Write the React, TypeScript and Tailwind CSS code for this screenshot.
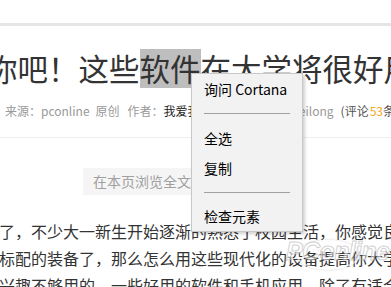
const cjk = '[font-family:"Noto_Sans_CJK_SC","Noto_Sans",sans-serif]';

function ContextMenu() {
  const Item = ({ label, h = 'h-[30px]' }: { label: string; h?: string }) => (
    <div className={`${h} flex items-center pl-[12px] text-[14px] text-black`}>{label}</div>
  );
  const Sep = () => (
    <div className="h-[19px] flex items-center px-[12px]">
      <div className="h-px w-full bg-[#a0a0a0]" />
    </div>
  );

  return (
    <div className="absolute left-[191px] top-[73px] w-[112px] bg-[#f2f2f2] border border-[#c8c8c8] shadow-[2px_2px_3px_rgba(0,0,0,0.18)]">
      <Item label="询问 Cortana" />
      <Sep />
      <Item label="全选" />
      <Item label="复制" />
      <Sep />
      <Item label="检查元素" h="h-[29px]" />
    </div>
  );
}

export default function App() {
  return (
    <div className={`relative w-[391px] h-[287px] overflow-hidden bg-white ${cjk}`}>
      <div className="h-[23px]" />
      <div className="h-[3px] bg-[#e5e5e5]" />

      <h1 className="mt-[23px] ml-[-13px] whitespace-nowrap text-[30.5px] leading-[39px] font-normal text-[#333]">
        你吧！这些<span className="inline-block h-[39px] bg-[#bebebe]">软件</span>在大学将很好用
      </h1>

      <div className="mt-[13px] pl-[5px] flex items-center whitespace-nowrap text-[12px] leading-[20px] text-[#999]">
        <span className="w-[218px] shrink-0 overflow-hidden">
          来源：pconline<span className="ml-[6px]">原创</span>
          <span className="ml-[8px]">作者：</span>
          <span className="text-[#222]">我爱我家</span>
        </span>
        <span>责编：wangweilong</span>
        <span className="ml-[7px] text-[#555]">(评论</span>
        <span className="ml-[1px] text-[#f5a623]">53</span>
        <span className="text-[#555]">条)</span>
      </div>

      <div className="mt-[16px] h-px bg-[#eeeeee]" />

      <div className="mt-[30px] ml-[83px] w-[210px] h-[27px] bg-[#f5f5f5] flex items-center pl-[10px] text-[14px] text-[#a0a0a0]">
        在本页浏览全文
      </div>

      <div className="mt-[23px] ml-[-1px] text-[16px] leading-[27px] text-[#333] whitespace-nowrap">
        <p>了，不少大一新生开始逐渐的熟悉了校园生活，你感觉良</p>
        <p>标配的装备了，那么怎么用这些现代化的设备提高你大学</p>
        <p>兴趣不够用的，一些好用的软件和手机应用，除了有适合个人</p>
      </div>

      <div className="absolute left-[296px] top-[240px] w-[64px] h-[30px] rounded-[50%] border-2 border-white/60 shadow-[0_0_2px_rgba(150,150,150,0.5)]" />
      <div className="absolute left-[286px] top-[233px] text-[25px] italic font-bold tracking-tight text-white/50 [-webkit-text-stroke:1px_rgba(170,170,170,0.55)] [font-family:Arial,'Liberation_Sans',sans-serif]">
        PConline
      </div>

      <ContextMenu />
    </div>
  );
}
